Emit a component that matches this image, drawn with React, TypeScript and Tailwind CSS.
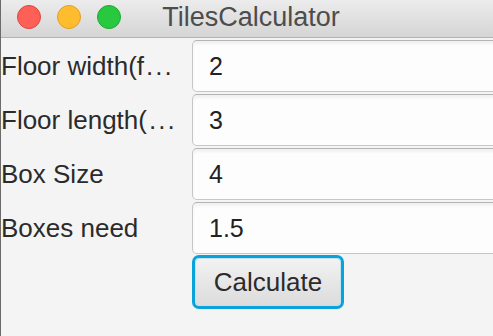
import React from 'react'

const rows = [
  { label: 'Floor width(f', dots: true, value: '2' },
  { label: 'Floor length(', dots: true, value: '3' },
  { label: 'Box Size', dots: false, value: '4' },
  { label: 'Boxes need', dots: false, value: '1.5' },
]

export default function App() {
  return (
    <div
      className="w-[493px] h-[336px] overflow-hidden bg-[#f4f4f4] border-l border-[#6b6b6b] flex flex-col"
      style={{ fontFamily: '"Liberation Sans", Arial, sans-serif' }}
    >
      {/* Title bar */}
      <div className="relative h-[38px] shrink-0 bg-gradient-to-b from-[#ececec] to-[#d5d5d5] border-b border-[#b3b3b3] flex items-center justify-center">
        <div className="absolute left-[16px] top-[5px] flex gap-[16px]">
          <span className="w-[24px] h-[24px] rounded-full bg-[#fe5f57] border border-[#e0443e]" />
          <span className="w-[24px] h-[24px] rounded-full bg-[#febc2e] border border-[#dea123]" />
          <span className="w-[24px] h-[24px] rounded-full bg-[#28c840] border border-[#1aab29]" />
        </div>
        <span className="text-[27px] leading-none text-[#4d4d4d] ml-[8px] mt-[-2px]">TilesCalculator</span>
      </div>

      {/* Form */}
      <div className="flex flex-col gap-[2px] pt-[2px]">
        {rows.map((r) => (
          <div key={r.label} className="flex items-center h-[52px]">
            <span className="w-[191px] shrink-0 text-[26px] leading-none text-[#2b2b2b] whitespace-nowrap">
              {r.label}
              {r.dots && <span className="tracking-[2px] ml-[2px]">...</span>}
            </span>
            <div className="w-[320px] shrink-0 h-[52px] bg-[#fdfdfd] rounded-[5px] border border-[#c6c6c6] border-t-[#b4b4b4] shadow-[inset_0_3px_3px_rgba(0,0,0,0.05)] flex items-center pl-[16px]">
              <span className="text-[25px] leading-none text-[#222]">{r.value}</span>
            </div>
          </div>
        ))}
        <div className="flex mt-[-1px]">
          <div className="w-[191px] shrink-0" />
          <button className="w-[152px] h-[54px] rounded-[7px] border-[3px] border-[#0aa2db] p-[1px] bg-[#bfe3f2]">
            <div className="w-full h-full rounded-[4px] bg-gradient-to-b from-[#f2f2f2] to-[#dcdcdc] flex items-center justify-center">
              <span className="text-[26px] leading-none text-[#2b2b2b]">Calculate</span>
            </div>
          </button>
        </div>
      </div>
    </div>
  )
}
